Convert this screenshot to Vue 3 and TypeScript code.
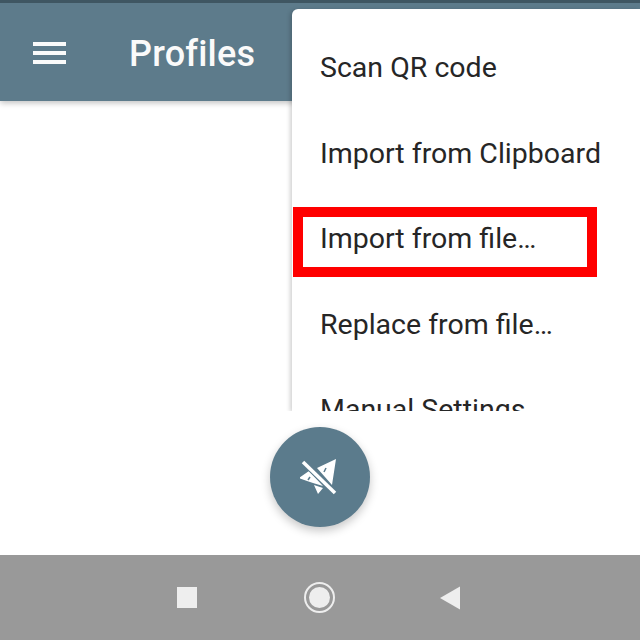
<template>
  <div class="screen">
    <header class="appbar">
      <button type="button" class="menu-btn" aria-label="Menu">
        <span v-for="n in 3" :key="n" class="menu-line"></span>
      </button>
      <h1 class="title">Profiles</h1>
    </header>

    <main class="content">
      <button type="button" class="fab" aria-label="Connect">
        <svg width="40" height="40" viewBox="1 -2 40 40">
          <path
            fill="#fff"
            d="M37 0 L18 9 L33 26 Z M0 19 L10 12 L24 27 L14 24 L8 22 Z M15 26 L19 35 L24 29 Z"
          />
          <path d="M27 9 L25 13" stroke="#5b7b8c" stroke-width="1.500" />
          <path d="M11 18 L9 21" stroke="#5b7b8c" stroke-width="1.500" />
          <path d="M4 3 L36 34" stroke="#5b7b8c" stroke-width="5.500" />
          <path d="M4 3 L36 34" stroke="#fff" stroke-width="3.500" />
        </svg>
      </button>
    </main>

    <nav class="navbar">
      <span class="nav-square"></span>
      <span class="nav-circle"><span class="nav-dot"></span></span>
      <svg width="22" height="26" viewBox="0 0 22 26">
        <path fill="#eee" d="M21 1.500 V24.500 L1 13 Z" />
      </svg>
    </nav>

    <ul class="dropdown">
      <li v-for="item in items" :key="item" class="dropdown-item">{{ item }}</li>
    </ul>
    <div class="highlight"></div>
  </div>
</template>

<script setup lang="ts">
const items: string[] = [
  'Scan QR code',
  'Import from Clipboard',
  'Import from file…',
  'Replace from file…',
  'Manual Settings'
]
</script>

<style>
html,
body {
  margin: 0;
  background: #fff;
}
</style>

<style scoped>
.screen {
  position: relative;
  display: flex;
  flex-direction: column;
  width: 640px;
  height: 640px;
  overflow: hidden;
  font-family: Roboto, "Liberation Sans", sans-serif;
}
.appbar {
  box-sizing: border-box;
  display: flex;
  align-items: center;
  flex: none;
  height: 101px;
  padding: 3px 0 0 33px;
  background: #5d7b8b;
  border-top: 3px solid #3f5662;
  box-shadow: 0 2px 6px rgba(0, 0, 0, 0.25);
  z-index: 1;
}
.menu-btn {
  display: flex;
  flex-direction: column;
  gap: 5px;
  width: 33px;
  margin-top: -2px;
  padding: 0;
  background: none;
  border: 0;
}
.menu-line {
  height: 4px;
  background: #fafafa;
}
.title {
  margin: 0 0 0 63px;
  font-size: 36px;
  font-weight: 500;
  letter-spacing: 0.200px;
  color: #fafafa;
}
.content {
  display: flex;
  justify-content: center;
  flex: 1;
  background: #fff;
}
.fab {
  display: grid;
  place-items: center;
  width: 100px;
  height: 100px;
  margin-top: 326px;
  padding: 0;
  background: #5b7b8c;
  border: 0;
  border-radius: 50%;
  box-shadow: 0 4px 10px rgba(0, 0, 0, 0.22);
}
.navbar {
  display: flex;
  align-items: center;
  justify-content: center;
  flex: none;
  height: 85px;
  padding-right: 2px;
  background: #999;
}
.nav-square {
  width: 20px;
  height: 21px;
  margin-right: 107px;
  background: #eee;
}
.nav-circle {
  box-sizing: border-box;
  display: grid;
  place-items: center;
  width: 31px;
  height: 31px;
  margin-right: 104px;
  border: 2px solid #eee;
  border-radius: 50%;
}
.nav-dot {
  width: 21px;
  height: 21px;
  background: #eee;
  border-radius: 50%;
}
.dropdown {
  position: absolute;
  top: 9px;
  left: 292px;
  z-index: 2;
  box-sizing: border-box;
  width: 348px;
  height: 402px;
  margin: 0;
  padding: 17px 0 0 28px;
  overflow: hidden;
  list-style: none;
  background: #fff;
  border-radius: 6px 0 0 0;
  box-shadow: -2px 1px 4px rgba(0, 0, 0, 0.18);
  clip-path: inset(-6px 0 0 -6px);
}
.dropdown-item {
  height: 85.500px;
  font-size: 28.500px;
  line-height: 85.500px;
  margin-top: -1px;
  margin-bottom: 1px;
  color: #262626;
  white-space: nowrap;
}
.highlight {
  position: absolute;
  top: 207px;
  left: 293px;
  z-index: 3;
  box-sizing: border-box;
  width: 304px;
  height: 70px;
  border: 10px solid #f00;
}
</style>
